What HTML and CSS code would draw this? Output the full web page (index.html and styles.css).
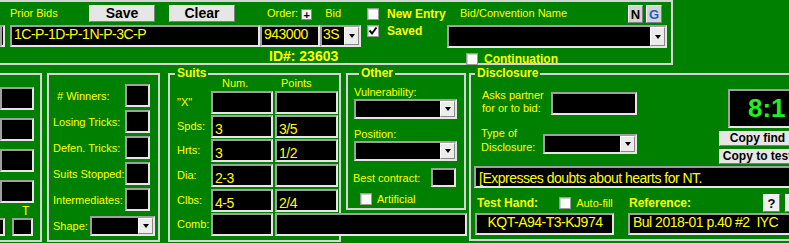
FILE: index.html
```html
<!DOCTYPE html>
<html lang="en">
<head>
  <meta charset="UTF-8" />
  <title>Bid Entry</title>
  <link rel="stylesheet" href="styles.css">
</head>
<body>
  <div class="top">
    <div class="field stub"></div>
    <div class="bids">
      <div class="row">
        <span class="lbl prior">Prior Bids</span>
        <button class="btn big">Save</button>
        <button class="btn big clear">Clear</button>
      </div>
      <div class="field prior-bids">1C-P-1D-P-1N-P-3C-P</div>
    </div>
    <div class="order">
      <div class="row">
        <span class="lbl order-lbl">Order:</span>
        <button class="plus">+</button>
        <span class="lbl bid-lbl">Bid</span>
      </div>
      <div class="pair">
        <div class="field order-no">943000</div>
        <div class="select bid-sel"><span class="val">3S</span><span class="arrow"></span></div>
      </div>
      <div class="id">ID#: 23603</div>
    </div>
    <div class="flags">
      <div class="chk b"><span class="box"></span>New Entry</div>
      <div class="chk b"><span class="box"><svg width="10" height="10" viewBox="0 0 10 10"><path d="M1.5 4.5 L4 7.5 L8.5 1.5" fill="none" stroke="#000" stroke-width="2"/></svg></span>Saved</div>
    </div>
    <div class="conv">
      <div class="row">
        <span class="lbl conv-lbl">Bid/Convention Name</span>
        <button class="btn sq">N</button>
        <button class="btn sq g">G</button>
      </div>
      <div class="select conv-sel"><span class="val"></span><span class="arrow"></span></div>
      <div class="chk b cont"><span class="box"></span>Continuation</div>
    </div>
  </div>

  <div class="main">
    <div class="panel p-left">
      <div class="field cell"></div>
      <div class="field cell"></div>
      <div class="field cell"></div>
      <div class="field cell"></div>
      <div class="t-lbl">T</div>
      <div class="t-row">
        <div class="field tiny cut"></div>
        <div class="field tiny"></div>
      </div>
    </div>

    <div class="panel p-stats">
      <div class="stat"><span class="wins"># Winners:</span><div class="field box25"></div></div>
      <div class="stat"><span>Losing Tricks:</span><div class="field box25"></div></div>
      <div class="stat"><span>Defen. Tricks:</span><div class="field box25"></div></div>
      <div class="stat"><span>Suits Stopped:</span><div class="field box25"></div></div>
      <div class="stat"><span>Intermediates:</span><div class="field box25"></div></div>
      <div class="stat shape"><span>Shape:</span><div class="select shape-sel"><span class="val"></span><span class="arrow"></span></div></div>
    </div>

    <div class="panel grp suits">
      <div class="title">Suits</div>
      <div class="suit-grid">
        <span></span><span class="hd num-hd">Num.</span><span class="hd pts-hd">Points</span>
        <span class="rl">"X"</span><div class="field sf"></div><div class="field sf"></div>
        <span class="rl">Spds:</span><div class="field sf">3</div><div class="field sf">3/5</div>
        <span class="rl">Hrts:</span><div class="field sf">3</div><div class="field sf">1/2</div>
        <span class="rl">Dia:</span><div class="field sf">2-3</div><div class="field sf"></div>
        <span class="rl">Clbs:</span><div class="field sf">4-5</div><div class="field sf">2/4</div>
        <span class="rl">Comb:</span><div class="field sf"></div><div class="field sf comb"></div>
      </div>
    </div>

    <div class="panel grp other">
      <div class="title">Other</div>
      <div class="o-lbl">Vulnerability:</div>
      <div class="select o-sel"><span class="val"></span><span class="arrow"></span></div>
      <div class="o-lbl">Position:</div>
      <div class="select o-sel"><span class="val"></span><span class="arrow"></span></div>
      <div class="best"><span>Best contract:</span><div class="field best-f"></div></div>
      <div class="chk art"><span class="box"></span>Artificial</div>
    </div>

    <div class="panel grp disc">
      <div class="title">Disclosure</div>
      <div class="d-top">
        <div class="d-form">
          <div class="d-row ask">
            <span class="d-lbl">Asks partner<br>for or to bid:</span>
            <div class="field ask-f"></div>
          </div>
          <div class="d-row type">
            <span class="d-lbl">Type of<br>Disclosure:</span>
            <div class="select type-sel"><span class="val"></span><span class="arrow"></span></div>
          </div>
        </div>
        <div class="d-side">
          <div class="clock">8:1</div>
          <button class="btn copy">Copy find</button>
          <button class="btn copy">Copy to test</button>
        </div>
      </div>
      <div class="field note">[Expresses doubts about hearts for NT.</div>
      <div class="d-bottom">
        <div class="hand">
          <div class="d-head">
            <span class="b hand-lbl">Test Hand:</span>
            <div class="chk auto"><span class="box"></span>Auto-fill</div>
          </div>
          <div class="field hand-f">KQT-A94-T3-KJ974</div>
        </div>
        <div class="ref">
          <div class="d-head">
            <span class="b ref-lbl">Reference:</span>
            <button class="btn q">?</button>
            <button class="btn q"></button>
          </div>
          <div class="field ref-f">Bul 2018-01 p.40 #2&nbsp; IYC</div>
        </div>
      </div>
    </div>
  </div>
</body>
</html>
```

FILE: styles.css
```css
* {
  box-sizing: border-box;
}
body {
  margin: 0;
  width: 789px;
  height: 243px;
  overflow: hidden;
  background: #008000;
  color: #ffff00;
  font-family: "Liberation Sans", Arial, sans-serif;
  font-size: 11px;
}
.b {
  font-weight: bold;
  font-size: 12px;
}
.lbl {
  line-height: 17px;
  white-space: nowrap;
}

/* inputs */
.field {
  background: #000;
  border: 2px solid;
  border-color: #a0a0a0 #e6e6e6 #e6e6e6 #a0a0a0;
  color: #ffff00;
  font: 14px/15px "Liberation Sans", Arial, sans-serif;
  letter-spacing: -0.5px;
  padding-left: 1px;
  white-space: nowrap;
  overflow: hidden;
}
.select {
  display: flex;
  background: #000;
  border: 2px solid;
  border-color: #a0a0a0 #e6e6e6 #e6e6e6 #a0a0a0;
  color: #ffff00;
  font: 14px/15px "Liberation Sans", Arial, sans-serif;
  letter-spacing: -0.5px;
}
.select .val {
  flex: 1;
  padding-left: 1px;
}
.arrow {
  width: 15px;
  background: #ececec;
  border: 1px solid;
  border-color: #fff #888 #888 #fff;
  display: flex;
  align-items: center;
  justify-content: center;
}
.arrow::after {
  content: "";
  border-left: 3px solid transparent;
  border-right: 3px solid transparent;
  border-top: 4px solid #000;
}
.btn {
  background: #e6e6e6;
  border: 1px solid;
  border-color: #fff #808080 #808080 #fff;
  color: #000;
  font: bold 14px/13px "Liberation Sans", Arial, sans-serif;
  padding: 0;
}
.chk {
  display: flex;
  align-items: center;
  white-space: nowrap;
}
.box {
  width: 12px;
  height: 12px;
  background: #fff;
  border: 1px solid #9a9a9a;
  box-shadow: inset 1px 1px 0 #d0d0d0;
  display: flex;
  align-items: center;
  justify-content: center;
}

/* top bar */
.top {
  display: flex;
  width: 675px;
  height: 65px;
  margin-left: -2px;
  border: 2px solid #d4d4d4;
}
.row {
  display: flex;
  align-items: flex-start;
  height: 23px;
  padding-top: 3px;
}
.stub {
  width: 4px;
  height: 22px;
  margin-top: 23px;
}
.bids {
  margin-left: 5px;
  width: 250px;
}
.prior {
  width: 79px;
}
.big {
  width: 66px;
  height: 17px;
}
.clear {
  margin-left: 14px;
}
.prior-bids {
  height: 22px;
  padding-left: 2px;
}
.order {
  width: 101px;
}
.order-lbl {
  margin-left: 7px;
}
.plus {
  width: 11px;
  height: 11px;
  margin: 4px 0 0 3px;
  padding: 0;
  background: #f4f4f4;
  border: 1px solid #888;
  color: #000;
  font: bold 11px/8px "Liberation Sans", sans-serif;
}
.bid-lbl {
  margin-left: 13px;
}
.pair {
  display: flex;
  height: 22px;
}
.order-no {
  width: 60px;
  padding-left: 2px;
}
.bid-sel {
  width: 41px;
}
.id {
  margin: 1px 0 0 9px;
  font-weight: bold;
  font-size: 14px;
  line-height: 16px;
}
.flags {
  margin-left: 6px;
  width: 80px;
  padding-top: 3px;
}
.flags .chk {
  height: 17px;
}
.flags .box {
  margin-right: 8px;
}
.conv {
  width: 220px;
}
.conv-lbl {
  margin-left: 13px;
}
.sq {
  width: 15px;
  height: 18px;
  margin-left: auto;
  background: #d4d4d4;
  font-size: 13px;
}
.sq.g {
  width: 16px;
  margin: 0 5px 0 3px;
  color: #1a5fc8;
}
.conv-sel {
  height: 23px;
}
.cont {
  margin: 4px 0 0 19px;
  height: 13px;
}
.cont .box {
  margin-right: 6px;
}

/* lower panels */
.main {
  display: flex;
  margin-top: 8px;
}
.panel {
  flex-shrink: 0;
  height: 169px;
  border: 2px solid #d4d4d4;
}
.grp .title {
  width: max-content;
  margin: -9px 0 -3px 5px;
  padding: 0 2px;
  background: #008000;
  font-weight: bold;
  font-size: 12px;
  line-height: 14px;
}

.p-left {
  width: 44px;
  margin-left: -2px;
  padding-top: 12px;
}
.cell {
  width: 34px;
  height: 23px;
  margin-bottom: 8px;
}
.t-lbl {
  margin-top: -6px;
  padding-left: 22px;
  font-size: 12px;
  line-height: 12px;
}
.t-row {
  display: flex;
  margin-top: 1px;
}
.tiny {
  width: 21px;
  height: 18px;
  margin-left: 7px;
}
.tiny.cut {
  margin-left: -16px;
}

.p-stats {
  width: 113px;
  margin-left: 5px;
  padding: 6px 8px 0 4px;
}
.stat {
  display: flex;
  align-items: center;
  height: 23px;
  margin-top: 3px;
  white-space: nowrap;
}
.wins {
  margin-left: 4px;
}
.box25 {
  width: 25px;
  height: 23px;
  margin-left: auto;
}
.stat.shape {
  height: 20px;
  margin-top: 5px;
}
.shape-sel {
  width: 65px;
  height: 20px;
  margin: 0 -5px 0 auto;
}

.suits {
  width: 173px;
  margin-left: 8px;
}
.suit-grid {
  display: grid;
  grid-template-columns: 39px 62px 63px;
  grid-template-rows: 14px 24px 24px 25px 25px 24px 24px;
  column-gap: 2px;
}
.hd {
  line-height: 13px;
}
.num-hd {
  padding-left: 11px;
}
.pts-hd {
  padding-left: 6px;
}
.rl {
  padding-left: 7px;
  line-height: 23px;
}
.sf {
  height: 23px;
  padding-left: 2px;
  line-height: 25px;
}
.sf.comb {
  width: 192px;
}

.other {
  width: 120px;
  height: 137px;
  margin-left: 5px;
  padding: 0 8px 0 6px;
}
.o-lbl {
  margin-top: 9px;
  line-height: 13px;
}
.o-sel {
  width: 103px;
  height: 20px;
}
.best {
  display: flex;
  align-items: center;
  margin: 7px 0 0 -1px;
  white-space: nowrap;
}
.best-f {
  width: 25px;
  height: 19px;
  margin-left: auto;
}
.art {
  margin: 6px 0 0 6px;
}
.art .box {
  margin-right: 5px;
}

.disc {
  width: 360px;
  height: 168px;
  margin-left: 3px;
}
.disc .title {
  margin-left: 4px;
}
.d-top {
  display: flex;
}
.d-form {
  flex-shrink: 0;
  width: 248px;
}
.d-row {
  display: flex;
  align-items: flex-start;
}
.d-lbl {
  white-space: nowrap;
}
.ask {
  margin-top: 12px;
}
.ask .d-lbl {
  width: 80px;
  padding-left: 11px;
  line-height: 13px;
}
.ask-f {
  width: 86px;
  height: 23px;
  margin-top: 3px;
}
.type {
  margin-top: 11px;
}
.type .d-lbl {
  width: 72px;
  padding-left: 10px;
  line-height: 14px;
}
.type-sel {
  width: 94px;
  height: 20px;
  margin-top: 8px;
}
.d-side {
  display: flex;
  flex-direction: column;
}
.clock {
  width: 90px;
  height: 39px;
  margin: 12px 0 0 9px;
  padding-left: 18px;
  background: #000;
  border: 2px solid;
  border-color: #a0a0a0 #e6e6e6 #e6e6e6 #a0a0a0;
  color: #22ee22;
  font: bold 26px/35px "Liberation Sans", sans-serif;
}
.copy {
  width: 77px;
  height: 15px;
  margin-top: 3px;
  font-size: 12px;
}
.note {
  width: 330px;
  height: 22px;
  margin: 2px 0 0 3px;
  padding-left: 3px;
  line-height: 21px;
}
.d-bottom {
  display: flex;
}
.d-head {
  display: flex;
  align-items: center;
  height: 20px;
  margin-top: 5px;
  white-space: nowrap;
}
.hand {
  width: 139px;
  margin-left: 4px;
}
.hand-lbl {
  padding-left: 2px;
}
.auto {
  margin-left: 21px;
}
.auto .box {
  margin-right: 5px;
}
.hand-f {
  height: 22px;
  text-align: center;
  line-height: 14px;
}
.ref {
  width: 174px;
  margin-left: 14px;
}
.ref-lbl {
  padding-left: 1px;
}
.q {
  width: 17px;
  height: 18px;
  margin-left: 5px;
  background: #f0f0f0;
  font-size: 13px;
}
.ref-lbl + .q {
  margin-left: auto;
}
.ref-f {
  height: 22px;
  padding-left: 3px;
  line-height: 14px;
}
```
